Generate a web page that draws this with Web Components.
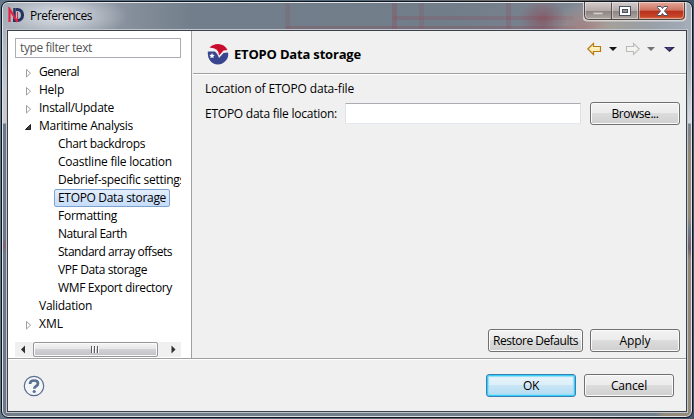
<!DOCTYPE html>
<html lang="en"><head><meta charset="utf-8"><title>Preferences</title>
<style>html,body{margin:0;width:694px;height:419px;overflow:hidden;background:#0c1016}body{font:12px/18px "Open Sans","Noto Sans",sans-serif;color:#000}</style></head>
<body><pref-window></pref-window>
<script>
const define=(name,html,init)=>customElements.define(name,class extends HTMLElement{
  connectedCallback(){ if(this.shadowRoot)return; const r=this.attachShadow({mode:'open'}); r.innerHTML=html; if(init)init(this,r); }
});

/* A single line of text tracked to the width in its "w" attribute */
define('fit-text','<style>:host{display:block;white-space:nowrap;flex:none}span{display:inline-block;white-space:nowrap}</style><span></span>',(el,r)=>{
  const s=r.querySelector('span'); s.textContent=el.getAttribute('text');
  const w=+el.getAttribute('w'); if(w){const n=s.textContent.length; s.style.letterSpacing=((w-s.getBoundingClientRect().width)/n)+'px';}
});

define('push-button',`<style>
:host{box-sizing:border-box;height:23px;border:1px solid #707070;border-radius:3px;background:linear-gradient(#f2f2f2,#ebebeb 49%,#dcdcdc 50%,#cfcfcf);box-shadow:inset 0 0 0 1px #fbfbfb;display:flex;justify-content:center;flex:none;line-height:21px}
:host([primary]){border-color:#3c7fb1;background:linear-gradient(#eaf4fa,#dbeef8 49%,#c8e5f5 50%,#b2dcf2);box-shadow:inset 0 0 0 1px #36cdf8,inset 0 0 1px 2px #8fe0f8}
</style><slot></slot>`);

define('tree-item',`<style>
:host{display:flex;height:18px;padding-left:10px;line-height:18px}
.a{width:14px;height:18px;flex:none}svg{display:block}
.l{box-sizing:border-box;height:18px;border:1px solid transparent;border-radius:2px;padding:0 3px 0 3px;line-height:16px;margin-left:-4px}
:host([child]) .a{width:33px}
:host([selected]) .l{border-color:#7da2ce;background:linear-gradient(#e3eefc,#c6dcfb)}
</style><div class="a"></div><div class="l"><slot></slot></div>`,(el,r)=>{
  const s=el.getAttribute('state'),a=r.querySelector('.a');
  if(s==='closed')a.innerHTML='<svg width="14" height="18"><path d="M1.5 6.5v7.500l4-3.800z" fill="#fff" stroke="#a0a0a0"/></svg>';
  if(s==='open')a.innerHTML='<svg width="14" height="18"><path d="M5.500 7.500v5h-5z" fill="#404040" stroke="#202020"/></svg>';
});

define('filter-field',`<style>:host{display:block;box-sizing:border-box;width:166px;height:20px;border:1px solid #abadb3;background:#fff;color:#555;padding-left:4px;line-height:18px}</style><slot></slot>`);
define('text-field',`<style>:host{display:block;box-sizing:border-box;width:236px;height:21px;border:1px solid;border-color:#abadb3 #dbdfe6 #e3e9ef #e2e3ea;border-radius:1px;background:#fff}</style>`);

define('h-scrollbar',`<style>:host{display:flex;width:166px;height:15px;background:#f0f0f0;align-items:center}
.t{box-sizing:border-box;width:125px;height:15px;border:1px solid #979797;border-radius:2px;background:linear-gradient(#f5f5f5,#e6e6e8 48%,#d2d2d6 50%,#c1c1c6);box-shadow:inset 0 0 0 1px #fafafa}
svg{display:block;flex:none}</style>
<svg width="18" height="15"><path d="M10 3.500v8l-4-4z" fill="#303030"/></svg>
<div class="t"><svg width="123" height="13"><path d="M57.500 3v7M60.500 3v7M63.500 3v7" stroke="#5a5a5a"/><path d="M58.500 4v6M61.500 4v6M64.500 4v6" stroke="#fff"/></svg></div>
<svg width="23" height="15"><path d="M13.500 3.500v8l4-4z" fill="#303030"/></svg>`);

define('caption-buttons',`<style>:host{display:block;width:104px;height:20px}svg{display:block}</style>
<svg width="104" height="20"><defs>
<linearGradient id="g" x2="0" y2="1"><stop offset="0" stop-color="#d3cccb"/><stop offset=".48" stop-color="#b4aaa8"/><stop offset=".5" stop-color="#8d8583"/><stop offset="1" stop-color="#b5aca6"/></linearGradient>
<linearGradient id="r" x2="0" y2="1"><stop offset="0" stop-color="#e4aa9c"/><stop offset=".46" stop-color="#cf7260"/><stop offset=".5" stop-color="#b8301b"/><stop offset=".8" stop-color="#c64427"/><stop offset="1" stop-color="#df8a62"/></linearGradient></defs>
<path d="M.5 0v14.500q0 4 4 4h94q4 0 4-4V0" fill="url(#g)" stroke="#f2eeee" stroke-opacity=".65" stroke-width="2"/>
<path d="M56 0v18h42q4 0 4-4V0z" fill="url(#r)"/>
<path d="M1.500 0v13.500q0 4 4 4h92q4 0 4-4V0" fill="none" stroke="#4b4444"/>
<path d="M28.500 0v17M55.500 0v17" stroke="#5c5351"/><path d="M2.500 1v12.500q0 3 3 3h22M29.500 1v15.500h25V1M56.500 1v15.500h41q3 0 3-3V1" fill="none" stroke="#fff" stroke-opacity=".4"/>
<path d="M2 .5h100" stroke="#fff" stroke-opacity=".45"/>
<rect x="10.500" y="10.500" width="9" height="2" fill="#d8d3d1" stroke="#aaa2a0"/>
<rect x="36.500" y="4.500" width="11" height="9" fill="#fff" stroke="#4a5163"/><rect x="39.500" y="7.500" width="5" height="3" fill="#9a918f" stroke="#4a5163"/>
<path d="M74.500 4.500h3.500l1.500 2 1.500-2h3.500v1l-3 3.500 3 3.500v1H81l-1.500-2-1.500 2h-3.500v-1l3-3.500-3-3.500z" fill="#fff" stroke="#4a5163"/></svg>`);

define('app-logo',`<style>:host{display:block}svg{display:block}</style><svg width="17" height="17"><path d="M8 2.500h1.500a5 5.500 0 0 1 0 11H5" fill="none" stroke="#26355f" stroke-width="3.200"/><path d="M6.500 1v14" stroke="#26355f" stroke-width="2.500"/><path d="M1.500 15V2L9.500 15" fill="none" stroke="#e52343" stroke-width="2.200"/><path d="M9.500 5v8" stroke="#e52343" stroke-width="1"/></svg>`);
define('page-logo',`<style>:host{display:block}svg{display:block}</style><svg width="22" height="22"><path d="M2.500 4.500Q6 1 11 1q6.500 0 9.500 6l-4 .5-4.500 5q0-4-2.500-6-2-1.500-7-2z" fill="#c90c2c"/><path d="M.8 8.500h7q2.500 1.500 4.200 6.500l4.500-5 4.500-.5q1 5-2.500 8.500-3.500 3.500-7.500 3.500-5 0-8-4Q.5 14 .8 8.500z" fill="#39458d"/><path d="m5 10 .8 1.700 2 .3-1.500 1.200.3 2L5 14.200l-1.700 1 .4-2L2.300 12l2-.3z" fill="#fff"/></svg>`);

define('nav-tools',`<style>:host{display:block}svg{display:block}</style><svg width="90" height="16"><defs><linearGradient id="y" x2="0" y2="1"><stop stop-color="#fffbe9"/><stop offset="1" stop-color="#fbe38d"/></linearGradient></defs>
<path d="M.8 8 6.500 2.500V5.500h7v5h-7v3z" fill="url(#y)" stroke="#b97a15" stroke-width="1.200"/>
<path d="M22 6h8l-4 4z" fill="#151515"/>
<path d="M52.200 8 46.500 2.500V5.500h-7v5h7v3z" fill="#f4f4f1" stroke="#bbb" stroke-width="1.100"/>
<path d="M60 6h8l-4 4z" fill="#747474"/><path d="M77 6h11l-5.500 5z" fill="#292345"/><path d="M79 6.500h6l-3 3z" fill="#4d438d"/></svg>`);
define('help-icon',`<style>:host{display:block}svg{display:block}</style><svg width="22" height="22"><circle cx="11" cy="11" r="9.700" fill="#f5f6f8" stroke="#5a6f91" stroke-width="1.200"/><path d="M7 9Q7 5.500 11 5.500t4 3q0 1.600-2 2.700-1.700 1-1.700 2.600" fill="none" stroke="#5a6f91" stroke-width="2.700"/><circle cx="11.200" cy="16.500" r="1.600" fill="#5a6f91"/></svg>`);

const rows=[['General',40,'closed'],['Help',25,'closed'],['Install/Update',75,'closed'],['Maritime Analysis',94,'open'],['Chart backdrops',87,'child'],['Coastline file location',114,'child'],['Debrief-specific settings',127,'child'],['ETOPO Data storage',108,'child selected'],['Formatting',59,'child'],['Natural Earth',69,'child'],['Standard array offsets',114,'child'],['VPF Data storage',89,'child'],['WMF Export directory',114,'child'],['Validation',53,''],['XML',24,'closed']];
define('pref-tree',`<style>:host{display:block;width:166px;height:270px;overflow:hidden}</style>${rows.map(([t,w,s])=>`<tree-item ${/child/.test(s)?s:`state="${s}"`}><fit-text text="${t}" w="${w}"></fit-text></tree-item>`).join('')}`);

define('pref-window',`<style>
:host{display:grid;box-sizing:border-box;width:694px;height:419px;padding:2px 2px;grid-template-rows:415px;background:linear-gradient(90deg,#65788b,#53677b 50%,#786e67 78%,#40566c)}
.frame{box-sizing:border-box;border:1px solid #e0e3e8;border-radius:6px;outline:1px solid #10161e;padding:0 5px 3px;display:grid;grid-template-rows:27px 382px;
background:linear-gradient(#a3abb7,#a9b0bb 60px,#d7dadf 120px,#7d8792 121px,#948a7c 150px,#948a7c 215px,#6f7a88 228px,#75606a 245px,#94887b 256px,#948a7c) right/6px 100% no-repeat,
linear-gradient(#a1a9b4,#c5c9cf 85px,#d0c8ca 120px,#6d7988 121px,#6d7988 235px,#80636f 243px,#6d7988 250px) left/6px 100% no-repeat,
linear-gradient(90deg,#717d89 652px,#948a7c 662px) bottom/100% 5px no-repeat,
radial-gradient(ellipse 70px 24px at 55px 13px,#d3d8df 15%,#d3d8df00),
radial-gradient(ellipse 24px 20px at 540px 16px,#8c414f90,#8c414f00),radial-gradient(ellipse 30px 20px at 580px 24px,#a7606970,#a7606900),radial-gradient(ellipse 60px 30px at 600px 26px,#aaa59b,#aaa59b00),
linear-gradient(#8c4a5840,#8c4a5840) 390px 13px/180px 4px no-repeat,linear-gradient(#8c4a5850,#8c4a5850) 283px 23px/290px 3px no-repeat,
linear-gradient(#8c4a5830,#8c4a5830) 282px 0/5px 26px no-repeat,linear-gradient(#8c4a5850,#8c4a5850) 389px 0/5px 26px no-repeat,linear-gradient(#8c4a5830,#8c4a5830) 416px 0/5px 26px no-repeat,linear-gradient(#8c4a5840,#8c4a5840) 503px 0/5px 26px no-repeat,
linear-gradient(90deg,#a0a7b1,#8b94a0 110px,#727e8b 190px,#717d89 450px,#7b8490 560px,#a3abb7)}
.title{display:flex;justify-content:space-between}
.title>div{display:flex;padding-top:4px;gap:5px}
caption-buttons{margin-right:-1px;margin-top:-1px}
.client{box-sizing:border-box;margin:0 -1px;border:1px solid #3a414a;outline:1px solid #c0c5cc;background:#f0f0f0;display:grid;grid-template-rows:328px 1fr}
.top{box-sizing:border-box;display:grid;grid-template-columns:184px 1fr;border-bottom:1px solid #a0a0a0;box-shadow:0 1px #fff}
.left{box-sizing:border-box;background:#fff;border-right:1px solid #a0a0a0;padding:7px 0 0 7px;display:flex;flex-direction:column}
pref-tree{margin-top:5px}h-scrollbar{margin-top:9px}
.right{display:grid;grid-template-rows:43px 1fr auto;margin-left:1px}
.head{box-sizing:border-box;border-bottom:1px solid #a0a0a0;box-shadow:0 1px #fff;display:flex;align-items:center;padding:3px 9px 0 14px;font-weight:700;gap:5px}
nav-tools{margin:-9px 0 0 auto}
.body{padding:6px 6px 0 12px}.row{display:flex;align-items:center;margin-top:4px}
.actions{display:flex;justify-content:flex-end;gap:7px;padding:0 6px 6px 0}
.bottom{display:flex;align-items:center;padding:1px 12px 0 15px;gap:8px}.bottom help-icon{margin-right:auto}
</style>
<div class="frame"><div class="title"><div><app-logo></app-logo><fit-text text="Preferences" w="62"></fit-text></div><caption-buttons></caption-buttons></div>
<div class="client"><div class="top"><div class="left"><filter-field><fit-text text="type filter text" w="72"></fit-text></filter-field><pref-tree></pref-tree><h-scrollbar></h-scrollbar></div>
<div class="right"><div class="head"><page-logo></page-logo><fit-text text="ETOPO Data storage" w="127" style="font-size:13px"></fit-text><nav-tools></nav-tools></div>
<div class="body"><fit-text text="Location of ETOPO data-file" w="149"></fit-text><div class="row"><fit-text text="ETOPO data file location:" w="132"></fit-text><text-field style="margin:0 9px 0 8px"></text-field><push-button style="width:90px"><fit-text text="Browse..." w="47"></fit-text></push-button></div></div>
<div class="actions"><push-button style="width:95px"><fit-text text="Restore Defaults" w="85"></fit-text></push-button><push-button style="width:90px"><fit-text text="Apply" w="31"></fit-text></push-button></div></div></div>
<div class="bottom"><help-icon></help-icon><push-button primary style="width:90px"><fit-text text="OK" w="16"></fit-text></push-button><push-button style="width:90px"><fit-text text="Cancel" w="36"></fit-text></push-button></div></div></div>`);
</script></body></html>
